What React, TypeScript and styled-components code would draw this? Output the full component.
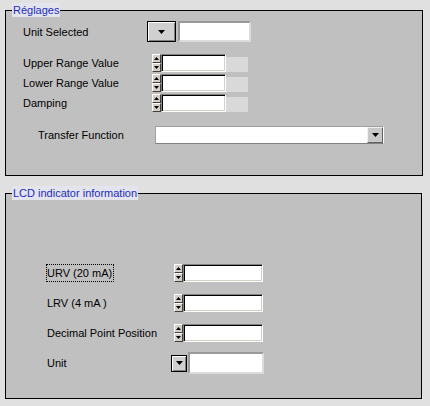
import React from "react";
import styled, { createGlobalStyle } from "styled-components";

const GlobalStyle = createGlobalStyle`
  html, body {
    margin: 0;
    padding: 0;
    background: #e0e0e0;
  }
  body {
    font-family: "Liberation Sans", Arial, sans-serif;
    font-size: 11px;
    color: #000;
  }
`;

const Page = styled.div`
  width: 430px;
  height: 406px;
  box-sizing: border-box;
  padding: 3px 0 0 5px;
  display: flex;
  flex-direction: column;
  gap: 10px;
`;

const Group = styled.fieldset<{ $width: number }>`
  margin: 0;
  padding: 0;
  min-width: 0;
  width: ${p => p.$width}px;
  box-sizing: border-box;
  border: 1px solid #000;
  background: #c0c0c0;
`;

const Legend = styled.legend`
  margin-left: 6px;
  padding: 0 1px;
  line-height: 14px;
  background: #e4e4ec;
  color: #1a2cc0;
`;

const Body = styled.div<{ $pad: string }>`
  display: flex;
  flex-direction: column;
  padding: ${p => p.$pad};
`;

const Row = styled.div<{ $top: number; $h: number }>`
  display: flex;
  align-items: center;
  height: ${p => p.$h}px;
  margin-top: ${p => p.$top}px;
`;

const Label = styled.span<{ $w: number; $indent?: number }>`
  flex: none;
  box-sizing: border-box;
  width: ${p => p.$w}px;
  padding-left: ${p => p.$indent ?? 0}px;
  white-space: nowrap;
`;

const Focused = styled.span`
  display: inline-block;
  line-height: 16px;
  padding: 0 1px 0 0;
  border: 1px dotted #000;
  margin-left: -1px;
`;

const Spin = styled.div`
  flex: none;
  display: flex;
  flex-direction: column;
  width: 9px;
  height: 18px;
`;

const SpinBtn = styled.div`
  flex: 1;
  box-sizing: border-box;
  display: flex;
  align-items: center;
  justify-content: center;
  background: #d4d0c8;
  border-style: solid;
  border-width: 1px;
  border-color: #fff #404040 #404040 #fff;
`;

const Field = styled.div<{ $w: number; $h: number }>`
  flex: none;
  width: ${p => p.$w}px;
  height: ${p => p.$h}px;
  box-sizing: border-box;
  background: #fff;
  border-style: solid;
  border-width: 1px;
  border-color: #808080 #fff #fff #808080;
  box-shadow: inset 1px 1px 0 #000, inset -1px -1px 0 #d4d0c8;
`;

const FlatField = styled.div<{ $w: number; $h: number; $ml: number }>`
  flex: none;
  width: ${p => p.$w}px;
  height: ${p => p.$h}px;
  margin-left: ${p => p.$ml}px;
  box-sizing: border-box;
  background: #fff;
  border-style: solid;
  border-width: 2px;
  border-color: #999 #dcdcdc #dcdcdc #999;
`;

const Units = styled.div`
  flex: none;
  align-self: flex-end;
  width: 22px;
  height: 15px;
  background: #d9d9d9;
`;

const DropBtn = styled.div<{ $w: number; $h: number }>`
  flex: none;
  width: ${p => p.$w}px;
  height: ${p => p.$h}px;
  box-sizing: border-box;
  display: flex;
  align-items: center;
  justify-content: center;
  background: #d0d0d0;
  border: 1px solid #000;
  box-shadow: inset 1px 1px 0 #fff, inset -1px -1px 0 #808080;
`;

const Combo = styled.div`
  flex: none;
  display: flex;
  width: 229px;
  height: 18px;
  box-sizing: border-box;
  background: #fff;
  border-style: solid;
  border-width: 1px;
  border-color: #a0a0a0 #fff #808080 #a0a0a0;
`;

const ComboText = styled.div`
  flex: 1;
`;

const ComboBtn = styled.div`
  flex: none;
  width: 16px;
  box-sizing: border-box;
  display: flex;
  align-items: center;
  justify-content: center;
  background: #c8c8c8;
  border-style: solid;
  border-width: 1px;
  border-color: #f0f0f0 #606060 #606060 #f0f0f0;
`;

function Tri({ up = false, w, h }: { up?: boolean; w: number; h: number }) {
  const pts = up ? `0,${h} ${w},${h} ${w / 2},0` : `0,0 ${w},0 ${w / 2},${h}`;
  return (
    <svg width={w} height={h} viewBox={`0 0 ${w} ${h}`} style={{ display: "block" }}>
      <polygon points={pts} fill="#000" />
    </svg>
  );
}

function Spinner() {
  return (
    <Spin>
      <SpinBtn><Tri up w={5} h={3} /></SpinBtn>
      <SpinBtn><Tri w={5} h={3} /></SpinBtn>
    </Spin>
  );
}

function RangeRow({ label, top }: { label: string; top: number }) {
  return (
    <Row $top={top} $h={18}>
      <Label $w={129}>{label}</Label>
      <Spinner />
      <Field $w={65} $h={18} />
      <Units />
    </Row>
  );
}

function LcdRow({ label, top }: { label: React.ReactNode; top: number }) {
  return (
    <Row $top={top} $h={20}>
      <Label $w={127}>{label}</Label>
      <Spinner />
      <Field $w={80} $h={18} />
    </Row>
  );
}

export default function App() {
  return (
    <>
      <GlobalStyle />
      <Page>
        <Group $width={418}>
          <Legend>Réglages</Legend>
          <Body $pad="0 0 31px 17px">
            <Row $top={4} $h={21}>
              <Label $w={124}>Unit Selected</Label>
              <DropBtn $w={29} $h={21}><Tri w={7} h={4} /></DropBtn>
              <FlatField $w={73} $h={21} $ml={2} />
            </Row>
            <RangeRow label="Upper Range Value" top={12} />
            <RangeRow label="Lower Range Value" top={2} />
            <RangeRow label="Damping" top={2} />
            <Row $top={14} $h={18}>
              <Label $w={132} $indent={15}>Transfer Function</Label>
              <Combo>
                <ComboText />
                <ComboBtn><Tri w={7} h={4} /></ComboBtn>
              </Combo>
            </Row>
          </Body>
        </Group>

        <Group $width={417}>
          <Legend>LCD indicator information</Legend>
          <Body $pad="0 0 25px 41px">
            <LcdRow label={<Focused>URV (20 mA)</Focused>} top={63} />
            <LcdRow label="LRV (4 mA )" top={10} />
            <LcdRow label="Decimal Point Position" top={10} />
            <Row $top={10} $h={20}>
              <Label $w={124}>Unit</Label>
              <DropBtn $w={16} $h={17}><Tri w={7} h={4} /></DropBtn>
              <FlatField $w={76} $h={22} $ml={1} />
            </Row>
          </Body>
        </Group>
      </Page>
    </>
  );
}
